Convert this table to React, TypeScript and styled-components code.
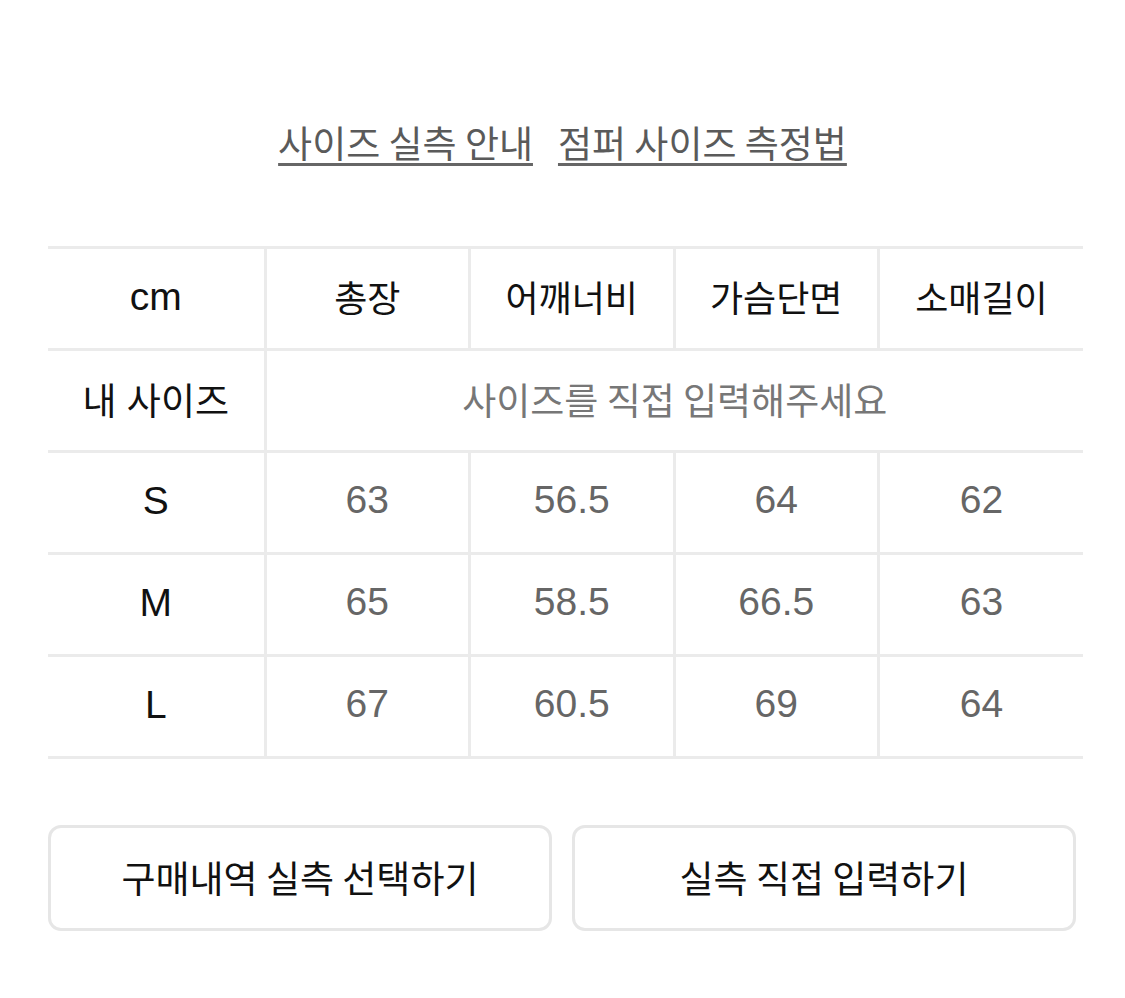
import React from "react";
import styled, { createGlobalStyle } from "styled-components";

const Global = createGlobalStyle`
  html, body { margin: 0; padding: 0; background: #fff; }
  body { font-family: "Liberation Sans", "Noto Sans CJK KR", sans-serif; }
  * { box-sizing: border-box; }
`;

const Page = styled.div`
  width: 1125px;
  padding: 120px 42px 60px 48px;
`;

const LinkRow = styled.div`
  display: flex;
  justify-content: center;
  gap: 25px;
  height: 45px;
  align-items: center;
  margin-left: -48px;
  margin-right: -42px;
`;

const GuideLink = styled.a`
  font-family: "Noto Sans CJK KR", sans-serif;
  font-size: 37px;
  line-height: 45px;
  color: #5a5a5a;
  text-decoration: underline;
  text-decoration-thickness: 3px;
  text-underline-offset: 5px;
  text-decoration-color: #666;
  cursor: pointer;
`;

const Table = styled.table`
  margin-top: 81px;
  width: 1035px;
  border-collapse: collapse;
  table-layout: fixed;
`;

const Row = styled.tr`
  height: 102px;
`;

const LabelCell = styled.th<{ $latin?: boolean }>`
  width: 217px;
  border-top: 3px solid #ebebeb;
  border-bottom: 3px solid #ebebeb;
  border-right: 3px solid #ebebeb;
  font-size: ${(p) => (p.$latin ? "39px" : "37px")};
  font-weight: 400;
  color: #111;
  text-align: center;
  vertical-align: middle;
  padding: 0 0 4px;
`;

const Cell = styled.td<{ $head?: boolean; $last?: boolean }>`
  border: 3px solid #ebebeb;
  border-right: ${(p) => (p.$last ? "none" : "3px solid #ebebeb")};
  font-size: ${(p) => (p.$head ? "36px" : "39px")};
  color: ${(p) => (p.$head ? "#111" : "#666")};
  text-align: center;
  vertical-align: middle;
  padding: 0 0 5px;
`;

const Placeholder = styled.td`
  border: 3px solid #ebebeb;
  border-right: none;
  font-family: "Noto Sans CJK KR", sans-serif;
  font-size: 37px;
  color: #777;
  text-align: center;
  vertical-align: middle;
  padding: 0 0 4px;
`;

const ButtonRow = styled.div`
  margin-top: 66px;
  width: 1028px;
  display: grid;
  grid-template-columns: 1fr 1fr;
  gap: 20px;
`;

const ActionButton = styled.button`
  height: 106px;
  border: 3px solid #e6e6e6;
  border-radius: 13px;
  background: #fff;
  font-family: "Noto Sans CJK KR", sans-serif;
  font-size: 37px;
  color: #111;
  cursor: pointer;
  padding: 0 0 3px;
`;

const headers = ["총장", "어깨너비", "가슴단면", "소매길이"];
const sizes: { label: string; values: string[] }[] = [
  { label: "S", values: ["63", "56.5", "64", "62"] },
  { label: "M", values: ["65", "58.5", "66.5", "63"] },
  { label: "L", values: ["67", "60.5", "69", "64"] },
];

export default function App() {
  return (
    <>
      <Global />
      <Page>
        <LinkRow>
          <GuideLink>사이즈 실측 안내</GuideLink>
          <GuideLink>점퍼 사이즈 측정법</GuideLink>
        </LinkRow>
        <Table>
          <tbody>
            <Row>
              <LabelCell $latin>cm</LabelCell>
              {headers.map((h, i) => (
                <Cell key={h} $head $last={i === headers.length - 1}>
                  {h}
                </Cell>
              ))}
            </Row>
            <Row>
              <LabelCell>내 사이즈</LabelCell>
              <Placeholder colSpan={4}>사이즈를 직접 입력해주세요</Placeholder>
            </Row>
            {sizes.map((s) => (
              <Row key={s.label}>
                <LabelCell $latin>{s.label}</LabelCell>
                {s.values.map((v, i) => (
                  <Cell key={i} $last={i === s.values.length - 1}>
                    {v}
                  </Cell>
                ))}
              </Row>
            ))}
          </tbody>
        </Table>
        <ButtonRow>
          <ActionButton>구매내역 실측 선택하기</ActionButton>
          <ActionButton>실측 직접 입력하기</ActionButton>
        </ButtonRow>
      </Page>
    </>
  );
}
